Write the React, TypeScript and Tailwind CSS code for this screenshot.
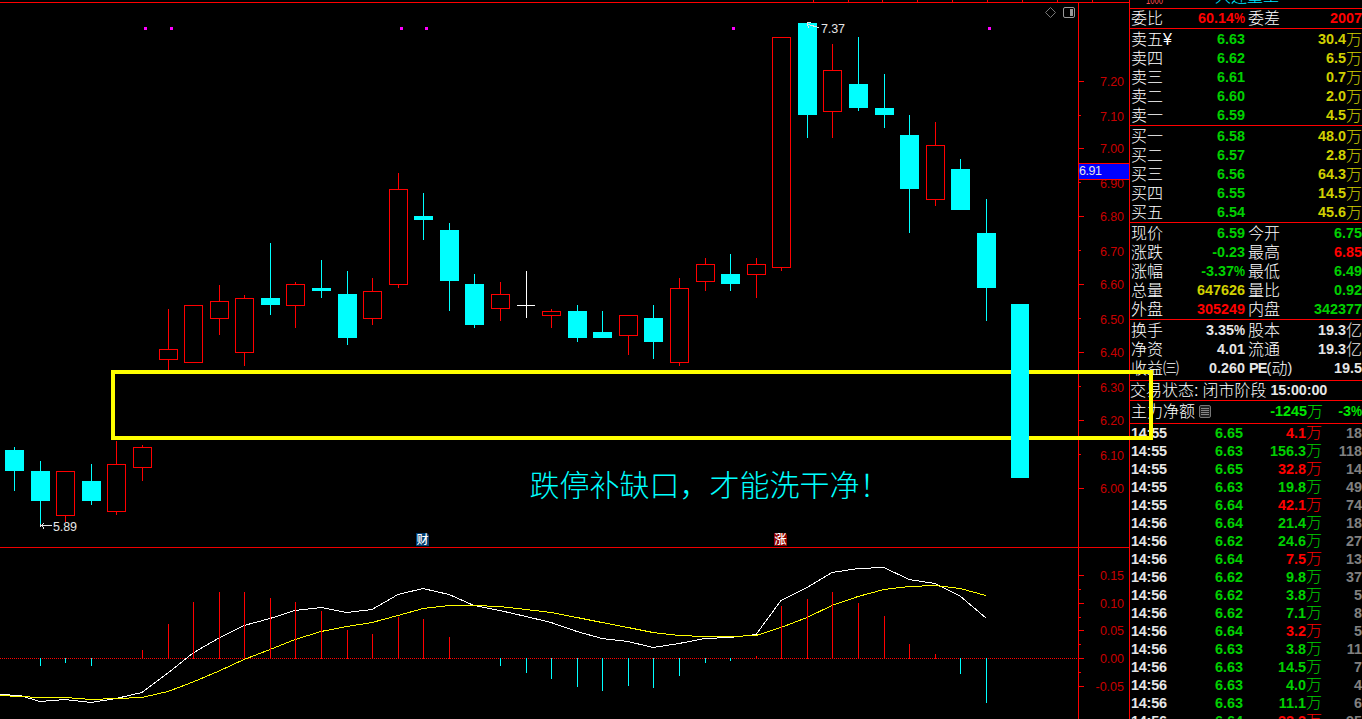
import { ReactNode } from "react";

type Kind = "up" | "down" | "flat";
// wick x, high, body top, body bottom, low, kind
type Candle = [number, number, number, number, number, Kind];

const CANDLES: Candle[] = [
  [14, 447, 450, 471, 491, "down"],
  [40, 461, 471, 501, 526, "down"],
  [65, 471, 471, 516, 522, "up"],
  [91, 464, 481, 501, 505, "down"],
  [116, 441, 464, 512, 515, "up"],
  [142, 445, 447, 468, 481, "up"],
  [168, 309, 349, 360, 370, "up"],
  [193, 305, 305, 363, 363, "up"],
  [219, 285, 301, 319, 335, "up"],
  [244, 295, 298, 353, 366, "up"],
  [270, 243, 298, 305, 315, "down"],
  [295, 282, 284, 306, 328, "up"],
  [321, 260, 288, 291, 298, "down"],
  [347, 271, 294, 338, 345, "down"],
  [372, 278, 291, 319, 325, "up"],
  [398, 173, 189, 285, 288, "up"],
  [423, 193, 216, 220, 240, "down"],
  [449, 223, 230, 281, 311, "down"],
  [474, 274, 284, 325, 328, "down"],
  [500, 282, 294, 309, 321, "up"],
  [526, 271, 305, 306, 318, "flat"],
  [551, 309, 311, 316, 328, "up"],
  [577, 305, 311, 338, 342, "down"],
  [602, 311, 332, 338, 338, "down"],
  [628, 315, 315, 336, 355, "up"],
  [653, 305, 318, 342, 359, "down"],
  [679, 278, 288, 363, 366, "up"],
  [705, 258, 264, 282, 291, "up"],
  [730, 254, 274, 284, 291, "down"],
  [756, 258, 264, 275, 298, "up"],
  [781, 37, 37, 268, 271, "up"],
  [807, 23, 23, 115, 138, "down"],
  [832, 44, 70, 112, 138, "up"],
  [858, 37, 84, 108, 111, "down"],
  [884, 74, 108, 115, 128, "down"],
  [909, 115, 135, 189, 233, "down"],
  [935, 122, 145, 200, 206, "up"],
  [960, 159, 169, 210, 210, "down"],
  [986, 199, 233, 288, 321, "down"],
];

const HIST: [number, number][] = [
  [40, 666], [65, 663], [91, 666], [142, 650], [168, 624], [193, 602], [219, 592], [244, 592],
  [270, 598], [295, 602], [321, 611], [347, 630], [372, 634], [398, 617], [423, 619], [449, 637],
  [500, 666], [526, 673], [551, 679], [577, 687], [602, 691], [628, 686], [653, 688], [679, 676],
  [705, 663], [730, 661], [756, 656], [781, 606], [807, 599], [832, 592], [858, 603], [884, 616],
  [909, 644], [935, 654], [960, 674], [986, 703],
];

const DIF =
  "0,694.5 20,695.5 40,701.5 65,699.5 91,702.5 116,698.5 142,692.5 168,673 193,653 219,638 244,625.5 270,618.5 295,610.5 321,607.5 347,612.5 372,609.5 398,594.5 423,588.5 449,594.5 474,605.5 500,610.5 526,616.5 551,622.5 577,631.5 602,638.5 628,641.5 653,647.5 679,643.5 705,638.5 730,637.5 756,634.5 781,600.5 807,587.5 832,572.5 858,568.5 884,567.5 909,579.5 935,583.5 960,596 986,618";
const DEA =
  "0,695.5 40,697.5 65,697.5 91,699.5 116,698.5 142,697.5 168,691.5 193,682 219,671 244,659.5 270,649.5 295,639.5 321,631.5 347,626.5 372,622.5 398,615.5 423,608.5 449,605.5 474,605.5 500,606.5 526,609.5 551,612.5 577,617.5 602,622.5 628,627.5 653,632.5 679,635.5 705,636.5 730,636.5 756,635.5 781,627.5 807,617.5 832,605.5 858,596.5 884,589.5 909,586.5 935,585.5 960,588.5 986,595.5";

const AXIS: [string, number][] = [
  ["7.20", 86], ["7.10", 121], ["7.00", 153], ["6.90", 188], ["6.80", 221], ["6.70", 256],
  ["6.60", 289], ["6.50", 324], ["6.40", 357], ["6.30", 392], ["6.20", 425], ["6.10", 460],
  ["6.00", 493], ["0.15", 580], ["0.10", 608], ["0.05", 635], ["0.00", 663], ["-0.05", 691],
];
const MAJOR = [81, 148, 216, 284, 352, 420, 488, 575, 603, 630, 658, 686];
const MINOR = [115, 182, 250, 318, 386, 454, 589, 617, 644, 672];
const TOP_TICKS = [813, 848, 882, 917, 952, 987, 1022, 1057, 1092];

function CandleMark({ c }: { c: Candle }) {
  const [x, hi, top, bottom, lo, kind] = c;
  if (kind === "flat") {
    return (
      <g fill="#fff">
        <rect x={x - 9} y={top} width={18} height={1} />
        <rect x={x} y={hi} width={1} height={lo - hi} />
      </g>
    );
  }
  if (kind === "down") {
    return (
      <g fill="#00ffff">
        <rect x={x} y={hi} width={1} height={lo - hi} />
        <rect x={x - 9} y={top} width={19} height={bottom - top} />
      </g>
    );
  }
  return (
    <g fill="#ff0000">
      <rect x={x} y={hi} width={1} height={top - hi} />
      <rect x={x} y={bottom} width={1} height={lo - bottom} />
      <rect x={x - 8.5} y={top + 0.5} width={18} height={bottom - top - 1} fill="none" stroke="#ff0000" />
    </g>
  );
}

function Chart() {
  return (
    <svg width="1129" height="719" viewBox="0 0 1129 719" className="block shrink-0 font-['Liberation_Sans','Noto_Sans_CJK_SC',sans-serif]">
      <g shapeRendering="crispEdges">
        <rect x="0" y="2" width="1129" height="1" fill="#ff0000" />
        {TOP_TICKS.map((x) => <rect key={x} x={x} y="0" width="1" height="2" fill="#ff0000" />)}
        <rect x="0" y="547" width="1129" height="1" fill="#f00000" />
        <rect x="1078" y="2" width="1" height="717" fill="#ff0000" />
        {MAJOR.map((y) => <rect key={y} x="1079" y={y} width="5" height="1" fill="#ff0000" />)}
        {MINOR.map((y) => <rect key={y} x="1079" y={y} width="2" height="1" fill="#ff0000" />)}
        {[144, 170, 400, 425, 732, 988].map((x) => <rect key={x} x={x} y="27" width="3" height="3" fill="#ff00ff" />)}
        {CANDLES.map((c) => <CandleMark key={c[0]} c={c} />)}
      </g>
      <g shapeRendering="crispEdges" fill="none">
        <line x1="0" y1="658.5" x2="1078" y2="658.5" stroke="#ff0000" strokeDasharray="1 1" />
        <polyline points={DIF} stroke="#ffffff" />
        <polyline points={DEA} stroke="#ffff00" />
        {HIST.map(([x, y]) =>
          y < 658 ? (
            <rect key={x} x={x} y={y} width="1" height={659 - y} fill="#ff0000" />
          ) : (
            <rect key={x} x={x} y="658" width="1" height={y - 658} fill="#00ffff" />
          ),
        )}
      </g>
      <g fontSize="12.5" fill="#c80000">
        {AXIS.map(([t, y]) => (
          <text key={t} x={t.length > 4 ? 1095.5 : 1100} y={y} textLength={t.length > 4 ? 28.5 : 24}>{t}</text>
        ))}
      </g>
      <g shapeRendering="crispEdges">
        <rect x="1079" y="163" width="50" height="17" fill="#0000ff" />
        <rect x="1079" y="163" width="50" height="1" fill="#ff0000" />
        <rect x="1079" y="179" width="50" height="1" fill="#ff0000" />
      </g>
      <g fontSize="12.5" fill="#e6e6e6">
        <text x="1079" y="175" textLength="23">6.91</text>
        <text x="821" y="33" textLength="24">7.37</text>
        <text x="53" y="531" textLength="24">5.89</text>
      </g>
      <g fill="none" stroke="#e6e6e6" shapeRendering="crispEdges">
        <path d="M41 525.5H52M44 523L41.500 525.5L44 528.5M40.500 524V527" />
        <path d="M808 24.500L819 27.500M811 22.500H808L807.500 25L809 27.500" />
      </g>
      <path d="M1050.500 7.500l5 5l-5 5l-5 -5z" fill="none" stroke="#777" />
      <rect x="1063.500" y="7.500" width="11" height="10" rx="1.500" fill="none" stroke="#999" />
      <rect x="1070" y="9" width="3" height="7" fill="#999" />
      <text x="529.500" y="496" fontSize="30" fontWeight="300" fill="#00ffff" className="font-['Noto_Sans_CJK_SC',sans-serif]">跌停补缺口，才能洗干净！</text>
      <path d="M416 533h11l2 2v11h-13z" fill="#003c70" />
      <path d="M774 533h11l2 2v11h-13z" fill="#8b0000" />
      <g fontSize="12" fontWeight="500" fill="#fff">
        <text x="416.500" y="544">财</text>
        <text x="774.500" y="544">涨</text>
      </g>
    </svg>
  );
}

const G = "text-[#00d000]";
const R = "text-[#ff0000]";
const Y = "text-[#d0d000]";
const W = "text-[#e6e6e6]";

function Num({ v, c }: { v: string; c: string }) {
  const m = v.match(/^(.*?)([%万亿]?)$/)!;
  return (
    <span className={`flex items-center ${c}`}>
      <span className="font-bold">{m[1]}</span>
      {m[2] === "%" && <span className="w-[11px] origin-left scale-x-[0.86] font-bold">%</span>}
      {m[2] && m[2] !== "%" && <span className="w-4 text-[16px] font-light">{m[2]}</span>}
    </span>
  );
}

function Cjk({ children }: { children: ReactNode }) {
  return <span className="whitespace-nowrap text-[16px] font-light text-white">{children}</span>;
}

function Section({ children, h }: { children: ReactNode; h: string }) {
  return <section className={`flex shrink-0 flex-col border-t border-[#ff0000] ${h}`}>{children}</section>;
}

type Cell = [string, string, string];

function Pair({ a, b }: { a: Cell; b: Cell }) {
  return (
    <div className="flex h-[19px] shrink-0 items-center pl-[1px]">
      <div className="flex w-[114px] items-center justify-between">
        <Cjk>{a[0]}</Cjk>
        <Num v={a[1]} c={a[2]} />
      </div>
      <div className="ml-[3px] flex w-[114px] items-center justify-between">
        <Cjk>{b[0]}</Cjk>
        <Num v={b[1]} c={b[2]} />
      </div>
    </div>
  );
}

const SELL: [string, string, string][] = [
  ["卖五", "6.63", "30.4万"], ["卖四", "6.62", "6.5万"], ["卖三", "6.61", "0.7万"], ["卖二", "6.60", "2.0万"], ["卖一", "6.59", "4.5万"],
];
const BUY: [string, string, string][] = [
  ["买一", "6.58", "48.0万"], ["买二", "6.57", "2.8万"], ["买三", "6.56", "64.3万"], ["买四", "6.55", "14.5万"], ["买五", "6.54", "45.6万"],
];
const STATS: [Cell, Cell][] = [
  [["现价", "6.59", G], ["今开", "6.75", G]],
  [["涨跌", "-0.23", G], ["最高", "6.85", R]],
  [["涨幅", "-3.37%", G], ["最低", "6.49", G]],
  [["总量", "647626", Y], ["量比", "0.92", G]],
  [["外盘", "305249", R], ["内盘", "342377", G]],
];
const BASICS: [Cell, Cell][] = [
  [["换手", "3.35%", W], ["股本", "19.3亿", W]],
  [["净资", "4.01", W], ["流通", "19.3亿", W]],
];
const TRADES: [string, string, string, string, string][] = [
  ["14:55", "6.65", "4.1万", R, "18"],
  ["14:55", "6.63", "156.3万", G, "118"],
  ["14:55", "6.65", "32.8万", R, "14"],
  ["14:55", "6.63", "19.8万", G, "49"],
  ["14:55", "6.64", "42.1万", R, "74"],
  ["14:56", "6.64", "21.4万", G, "18"],
  ["14:56", "6.62", "24.6万", G, "27"],
  ["14:56", "6.64", "7.5万", R, "13"],
  ["14:56", "6.62", "9.8万", G, "37"],
  ["14:56", "6.62", "3.8万", G, "5"],
  ["14:56", "6.62", "7.1万", G, "8"],
  ["14:56", "6.64", "3.2万", R, "5"],
  ["14:56", "6.63", "3.8万", G, "11"],
  ["14:56", "6.63", "14.5万", G, "7"],
  ["14:56", "6.63", "4.0万", G, "4"],
  ["14:56", "6.63", "11.1万", G, "6"],
  ["14:56", "6.64", "33.3万", R, "95"],
];

function Quotes() {
  return (
    <aside className="flex h-full w-[233px] shrink-0 flex-col overflow-hidden border-l border-[#ff0000] text-[14.4px] leading-none text-[#e6e6e6]">
      <div className="flex h-[8px] shrink-0 items-end overflow-hidden whitespace-nowrap">
        <span className="ml-4 w-[69px] origin-left scale-x-[0.64] pb-[2px] text-[12px] text-[#ff5050]">1000</span>
        <span className="pb-[3px] text-[16px] font-light text-[#00e5ff]">大连重工</span>
      </div>
      <Section h="h-[20px]">
        <Pair a={["委比", "60.14%", R]} b={["委差", "2007", R]} />
      </Section>
      <Section h="h-[97px] pt-px">
        {SELL.map(([l, p, v], i) => (
          <Pair key={l} a={[i === 0 ? l + "¥" : l, p, G]} b={["", v, Y]} />
        ))}
      </Section>
      <Section h="h-[97px] pt-px">
        {BUY.map(([l, p, v]) => <Pair key={l} a={[l, p, G]} b={["", v, Y]} />)}
      </Section>
      <Section h="h-[97px] pt-px">
        {STATS.map(([a, b]) => <Pair key={a[0]} a={a} b={b} />)}
      </Section>
      <Section h="h-[61px] pt-px">
        {BASICS.map(([a, b]) => <Pair key={a[0]} a={a} b={b} />)}
        <div className="flex h-[19px] shrink-0 items-center pl-[1px]">
          <div className="flex w-[114px] items-center justify-between">
            <Cjk>收益㈢</Cjk>
            <Num v="0.260" c={W} />
          </div>
          <div className="ml-[3px] flex w-[114px] items-center justify-between">
            <span className="flex items-center pl-px">
              <span className="font-bold tracking-[-0.8px]">PE</span>(<Cjk>动</Cjk>)
            </span>
            <Num v="19.5" c={W} />
          </div>
        </div>
      </Section>
      <Section h="h-[20px]">
        <div className="flex h-[19px] items-center gap-[4px]">
          <Cjk>交易状态:</Cjk>
          <Cjk>闭市阶段</Cjk>
          <span className="font-bold tracking-[-0.1px]">15:00:00</span>
        </div>
      </Section>
      <Section h="h-[23px]">
        <div className="flex h-[21px] items-center pl-[1px]">
          <span className="w-[68px]"><Cjk>主力净额</Cjk></span>
          <svg width="12" height="13" viewBox="0 0 12 13" className="shrink-0">
            <rect x=".5" y=".5" width="11" height="12" rx="1.500" fill="#222" stroke="#777" />
            <path d="M2 3.500h8M2 5.500h8M2 7.500h8M2 9.500h8" stroke="#888" />
          </svg>
          <div className="flex w-[112px] justify-end"><Num v="-1245万" c="text-[#00e600]" /></div>
          <div className="flex w-[39px] justify-end"><Num v="-3%" c="text-[#00e600]" /></div>
        </div>
      </Section>
      <Section h="h-[296px]">
        {TRADES.map(([t, p, v, c, n], i) => (
          <div key={i} className="flex h-[18px] shrink-0 items-center pl-[1px]">
            <span className="w-[50px] font-bold tracking-[-0.2px]">{t}</span>
            <div className="flex w-[62px] justify-end"><Num v={p} c={G} /></div>
            <div className="flex w-[79px] justify-end"><Num v={v} c={c} /></div>
            <div className="flex w-[40px] justify-end"><Num v={n} c="text-[#808080]" /></div>
          </div>
        ))}
      </Section>
    </aside>
  );
}

export default function App() {
  return (
    <main className="relative flex h-[719px] w-[1362px] overflow-hidden bg-black font-['Liberation_Sans','Noto_Sans_CJK_SC',sans-serif]">
      <Chart />
      <Quotes />
      <div className="pointer-events-none absolute left-[111px] top-[370px] h-[70px] w-[1042px] border-4 border-[#ffff00]" />
      <div className="pointer-events-none absolute left-[1011px] top-[304px] h-[174px] w-[18px] bg-[#00ffff]" />
    </main>
  );
}
